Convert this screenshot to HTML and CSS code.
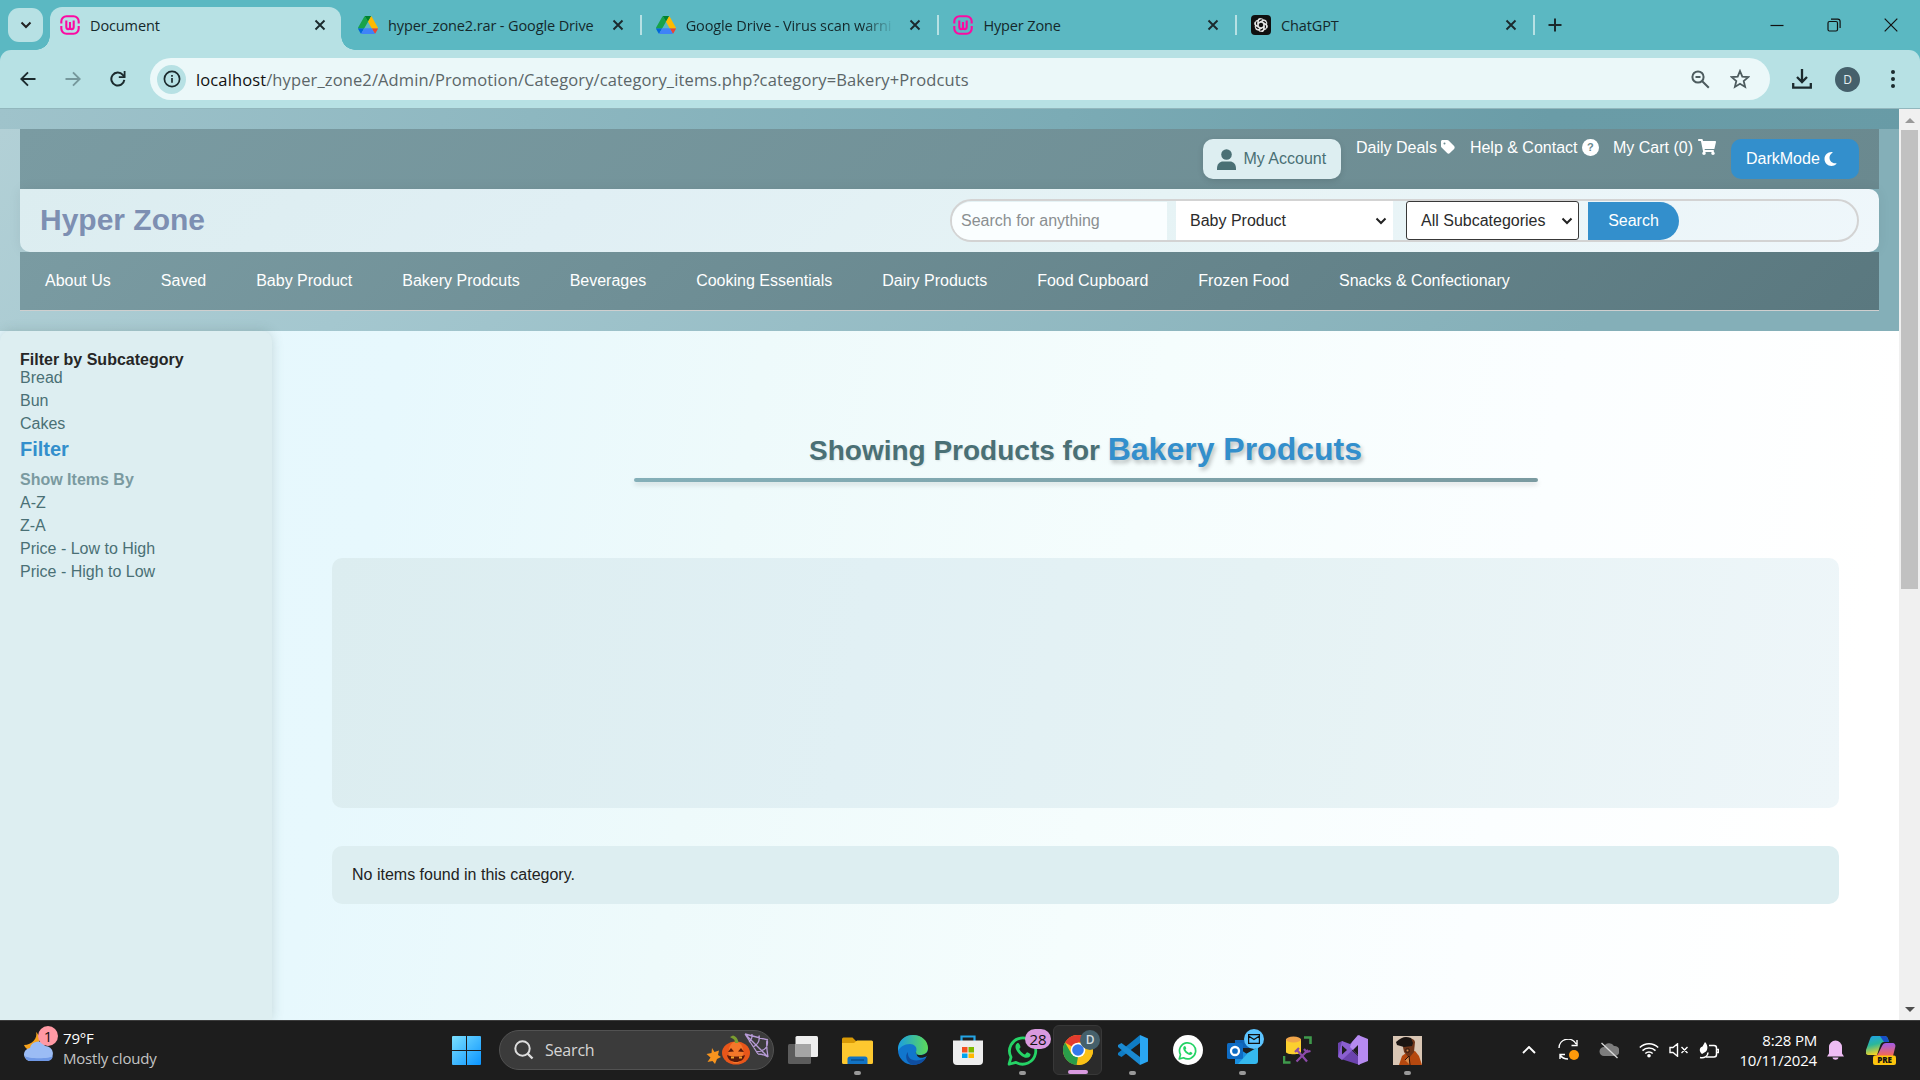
FILE: index.html
```html
<!DOCTYPE html>
<html lang="en">
<head>
<meta charset="utf-8">
<title>Document</title>
<link rel="stylesheet" href="styles.css">
</head>
<body>
<svg class="defs" width="0" height="0">
  <defs>
    <symbol id="x" viewBox="0 0 12 12"><path d="M1.5 1.5l9 9M10.5 1.5l-9 9" stroke="#1b2a2d" stroke-width="1.9" fill="none"/></symbol>
    <symbol id="wamp" viewBox="0 0 20 20"><g fill="none" stroke="#fb0aa2" stroke-width="2.1"><path d="M1.300 8.600V6.500a5.200 5.200 0 0 1 5.200-5.200h7a5.200 5.200 0 0 1 5.200 5.200v2.100M1.300 11v2.500a5.200 5.200 0 0 0 5.200 5.200h7a5.200 5.200 0 0 0 5.200-5.200V11"/><path d="M6.300 5.500v6.300c0 3.200 3.700 3.200 3.700 0V7M10 11.800c0 3.200 3.700 3.200 3.700 0V5.500"/></g></symbol>
    <symbol id="drive" viewBox="0 0 87.3 78"><path d="M6.6 66.85l3.85 6.65c.8 1.4 1.95 2.5 3.3 3.3L27.5 53H0c0 1.55.4 3.1 1.2 4.5z" fill="#0066da"/><path d="M43.65 25L29.9 1.2c-1.35.8-2.5 1.9-3.3 3.3L1.2 48.5A9 9 0 0 0 0 53h27.5z" fill="#17a34a"/><path d="M73.55 76.8c1.35-.8 2.5-1.9 3.3-3.3l9.25-16c.8-1.4 1.2-2.95 1.2-4.5H59.8l5.85 11.5z" fill="#ea4335"/><path d="M43.65 25L57.4 1.2C56.05.4 54.5 0 52.9 0H34.4c-1.6 0-3.15.45-4.5 1.2z" fill="#00832d"/><path d="M59.8 53H27.5L13.75 76.8c1.35.8 2.9 1.2 4.5 1.2h50.8c1.6 0 3.15-.45 4.5-1.2z" fill="#3f83f8"/><path d="M73.4 26.5L60.7 4.5c-.8-1.4-1.95-2.5-3.3-3.3L43.65 25 59.8 53h27.45c0-1.55-.4-3.1-1.2-4.5z" fill="#ffba00"/></symbol>
    <symbol id="caret" viewBox="0 0 12 8"><path d="M1.5 1.5L6 6l4.500-4.500" fill="none" stroke="#222" stroke-width="2"/></symbol>
    <symbol id="wa" viewBox="0 0 30 30"><path d="M2 28.300l1.900-6.800A12.700 12.700 0 1 1 8.700 26.500z" fill="none" stroke="currentColor" stroke-width="2.700" stroke-linejoin="round"/><path d="M10.800 7.800c-.9 0-2.600 1.100-2.600 3.500 0 4.400 6.300 10.700 10.800 10.700 2.600 0 3.800-1.800 3.800-3.200 0-.5-3-2-3.500-2l-1.900 2c-1.800-.5-5-3.500-5.500-5.300l1.200-1.700c0-.6-1.300-4-2.300-4z" fill="currentColor"/></symbol>
  </defs>
</svg>

<div class="tabstrip">
  <button class="tab-search"><svg width="12" height="8"><use href="#caret"/></svg></button>
  <div class="tab active"><svg width="20" height="20"><use href="#wamp"/></svg><span>Document</span><svg width="12" height="12"><use href="#x"/></svg></div>
  <div class="tab"><svg width="20" height="18"><use href="#drive"/></svg><span>hyper_zone2.rar - Google Drive</span><svg width="12" height="12"><use href="#x"/></svg></div>
  <div class="tab"><svg width="20" height="18"><use href="#drive"/></svg><span class="fade">Google Drive - Virus scan warni</span><svg width="12" height="12"><use href="#x"/></svg></div>
  <div class="tab"><svg width="20" height="20"><use href="#wamp"/></svg><span>Hyper Zone</span><svg width="12" height="12"><use href="#x"/></svg></div>
  <div class="tab"><svg width="20" height="20" viewBox="0 0 20 20"><rect width="20" height="20" rx="4" fill="#101010"/><g fill="none" stroke="#e8e8e8" stroke-width="1.100"><path id="p" d="M7.200 12.200V6.700a2.900 2.900 0 0 1 5.300-1.600M7.200 8l4.600-2.600a2.700 2.700 0 0 1 3.600 1.100"/><use href="#p" transform="rotate(60 10 10)"/><use href="#p" transform="rotate(120 10 10)"/><use href="#p" transform="rotate(180 10 10)"/><use href="#p" transform="rotate(240 10 10)"/><use href="#p" transform="rotate(300 10 10)"/></g></svg><span>ChatGPT</span><svg width="12" height="12"><use href="#x"/></svg></div>
  <svg class="plus" width="14" height="14" viewBox="0 0 14 14"><path d="M7 .5v13M.5 7h13" stroke="#1b2a2d" stroke-width="2"/></svg>
  <div class="winbtns">
    <svg width="14" height="14" viewBox="0 0 14 14"><path d="M.5 7.500h13" stroke="#111" stroke-width="1.200"/></svg>
    <svg width="14" height="14" viewBox="0 0 14 14"><path d="M1 5a1.500 1.500 0 0 1 1.500-1.500h6.500a1.500 1.500 0 0 1 1.500 1.500v6.500a1.500 1.500 0 0 1-1.500 1.500H2.500A1.500 1.500 0 0 1 1 11.500zM4 1.200h6.800a2.300 2.300 0 0 1 2.300 2.300v6.500" fill="none" stroke="#111" stroke-width="1.200"/></svg>
    <svg width="14" height="14" viewBox="0 0 14 14"><path d="M.7.700l12.600 12.600M13.300.7L.7 13.300" stroke="#111" stroke-width="1.200"/></svg>
  </div>
</div>

<div class="toolbar-bg"><div class="toolbar">
  <div class="navbtns">
    <svg width="16" height="16" viewBox="0 0 16 16"><path d="M15.500 8H1.500M8 1.300L1.300 8 8 14.700" fill="none" stroke="#1b2a2d" stroke-width="1.900"/></svg>
    <svg width="16" height="16" viewBox="0 0 16 16"><path d="M.5 8h14M8 1.300L14.700 8 8 14.700" fill="none" stroke="#76989c" stroke-width="1.900"/></svg>
    <svg width="16" height="16" viewBox="0 0 16 16"><path d="M14.300 8.800A6.500 6.500 0 1 1 12.800 3.800L14.500 6" fill="none" stroke="#1b2a2d" stroke-width="2"/><path d="M15.500 0v7H8.800V5.200h4.900V0z" fill="#1b2a2d"/></svg>
  </div>
  <div class="omnibox">
    <span class="info"><svg width="18" height="18" viewBox="0 0 18 18"><circle cx="9" cy="9" r="7.600" fill="none" stroke="#1b2a2d" stroke-width="1.700"/><path d="M9 8v4.700M9 5v1.700" stroke="#1b2a2d" stroke-width="1.700"/></svg></span>
    <span class="url"><b>localhost</b>/hyper_zone2/Admin/Promotion/Category/category_items.php?category=Bakery+Prodcuts</span>
    <svg width="19" height="19" viewBox="0 0 19 19"><circle cx="7" cy="7" r="5.600" fill="none" stroke="#4d5c5f" stroke-width="2"/><path d="M11 11l6.800 6.800M4.500 7h5" stroke="#4d5c5f" stroke-width="2"/></svg>
    <svg width="20" height="20" viewBox="0 0 20 20"><path d="M10 2l2.300 5.600 6 .5-4.600 3.900 1.400 5.900L10 14.700l-5.100 3.200 1.400-5.900L1.700 8.100l6-.5z" fill="none" stroke="#4d5c5f" stroke-width="1.800"/></svg>
  </div>
  <svg class="dl" width="20" height="20" viewBox="0 0 20 20"><path d="M10 0v12.500M5 8l5 5 5-5M1.200 14v4.700h17.600V14" fill="none" stroke="#1b2a2d" stroke-width="2.300"/></svg>
  <span class="avatar">D</span>
  <svg class="dots" width="4" height="18" viewBox="0 0 4 18"><g fill="#1b2a2d"><circle cx="2" cy="2" r="2"/><circle cx="2" cy="9" r="2"/><circle cx="2" cy="16" r="2"/></g></svg>
</div></div>

<div class="viewport">
  <div class="page">
    <header class="header">
      <div class="header-inner">
        <div class="topbar">
          <a class="account"><svg width="19" height="21" viewBox="0 0 19 21"><circle cx="9.500" cy="5.500" r="5.300" fill="#4a7075"/><path d="M0 21v-1.500c0-4.500 3-7 6-7h7c3 0 6 2.500 6 7V21z" fill="#4a7075"/></svg>My Account</a>
          <a>Daily Deals <svg width="14" height="16" viewBox="0 0 448 512"><path fill="#fff" d="M0 80V229.500c0 17 6.700 33.300 18.700 45.300l176 176c25 25 65.500 25 90.500 0L418.700 317.300c25-25 25-65.500 0-90.500l-176-176c-12-12-28.300-18.700-45.300-18.700H48C21.500 32 0 53.500 0 80zm112 32a32 32 0 1 1 0 64 32 32 0 1 1 0-64z"/></svg></a>
          <a>Help &amp; Contact <i class="help">?</i></a>
          <a>My Cart (0) <svg width="18" height="16" viewBox="0 0 576 512"><path fill="#fff" d="M528.120 301.319l47.273-208C578.806 78.301 567.391 64 551.990 64H159.208l-9.166-44.810C147.758 8.021 137.930 0 126.529 0H24C10.745 0 0 10.745 0 24v16c0 13.255 10.745 24 24 24h69.883l70.248 343.435C147.325 417.100 136 435.222 136 456c0 30.928 25.072 56 56 56s56-25.072 56-56c0-15.674-6.447-29.835-16.824-40h209.647C430.447 426.165 424 440.326 424 456c0 30.928 25.072 56 56 56s56-25.072 56-56c0-22.172-12.888-41.332-31.579-50.405l5.517-24.276c3.413-15.018-8.002-29.319-23.403-29.319H218.117l-6.545-32h293.145c11.206 0 20.920-7.754 23.403-18.681z"/></svg></a>
          <a class="dark">DarkMode <svg width="13" height="16" viewBox="0 0 384 512"><path fill="#fff" d="M223.500 32C100 32 0 132.300 0 256S100 480 223.500 480c60.600 0 115.500-24.200 155.800-63.400c5-4.900 6.300-12.500 3.100-18.700s-10.100-9.700-17-8.500c-9.800 1.700-19.800 2.600-30.100 2.600c-96.900 0-175.500-78.800-175.500-176c0-65.800 36-123.100 89.300-153.300c6.100-3.500 9.200-10.500 7.700-17.300s-7.300-11.900-14.300-12.500c-6.300-.5-12.600-.8-19-.8z"/></svg></a>
        </div>
        <div class="brandbar">
          <div class="brand">Hyper Zone</div>
          <div class="search">
            <div class="field">Search for anything</div>
            <div class="select cat">Baby Product<svg width="12" height="8"><use href="#caret"/></svg></div>
            <div class="select sub">All Subcategories<svg width="12" height="8"><use href="#caret"/></svg></div>
            <div class="go">Search</div>
          </div>
        </div>
        <nav class="nav"><a>About Us</a><a>Saved</a><a>Baby Product</a><a>Bakery Prodcuts</a><a>Beverages</a><a>Cooking Essentials</a><a>Dairy Products</a><a>Food Cupboard</a><a>Frozen Food</a><a>Snacks &amp; Confectionary</a></nav>
      </div>
    </header>
    <div class="body">
      <aside class="sidebar">
        <h4>Filter by Subcategory</h4>
        <a>Bread</a><a>Bun</a><a>Cakes</a>
        <h3>Filter</h3>
        <h5>Show Items By</h5>
        <a>A-Z</a><a>Z-A</a><a>Price - Low to High</a><a>Price - High to Low</a>
      </aside>
      <main class="main">
        <h1>Showing Products for <span>Bakery Prodcuts</span></h1>
        <div class="rule"></div>
        <div class="panel"></div>
        <div class="empty">No items found in this category.</div>
      </main>
    </div>
  </div>
  <div class="scrollbar"><i class="up"></i><i class="thumb"></i><i class="down"></i></div>
</div>

<div class="taskbar">
  <div class="weather">
    <div class="icon"><svg width="30" height="30" viewBox="0 0 30 30"><path d="M12 0c2 6-4 13-12 13 1 3 4 5 8 5 7 0 10-13 4-18z" fill="#f5a21c"/><path d="M7 29a6.500 6.500 0 0 1-1-13 8 8 0 0 1 15-2 7.600 7.600 0 0 1 2 15z" fill="#9bbcf5"/><path d="M1 24c2 3 26 3 28 0-.5 3-3 5-6 5H7c-3 0-5.500-2-6-5z" fill="#6f98e6"/></svg><b class="badge pink">1</b></div>
    <div class="wtext"><span>79°F</span><span class="dim">Mostly cloudy</span></div>
  </div>
  <div class="apps">
    <div class="app"><svg width="29" height="29" viewBox="0 0 29 29"><defs><linearGradient id="w" x2="1" y2="1"><stop stop-color="#7be0ff"/><stop offset="1" stop-color="#0a94ff"/></linearGradient></defs><path d="M0 1a1 1 0 0 1 1-1h13v14H0zM15 0h13a1 1 0 0 1 1 1v13H15zM0 15h14v14H1a1 1 0 0 1-1-1zM15 15h14v13a1 1 0 0 1-1 1H15z" fill="url(#w)"/></svg></div>
    <div class="pill"><svg width="20" height="20" viewBox="0 0 20 20"><circle cx="8.500" cy="8.500" r="7.200" fill="none" stroke="#ddd" stroke-width="2"/><path d="M13.500 13.500l5 5" stroke="#ddd" stroke-width="2.400"/></svg><span>Search</span>
      <svg width="64" height="34" viewBox="0 0 64 34"><path d="M6 15l2.500 4 4.500-1.500-1 4.500 3 2-4 2-2 5-2.500-3-5 1 3-4.500-4-3.500 5-1z" fill="#f7941e"/><ellipse cx="30" cy="20" rx="14" ry="11.500" fill="#e8561a"/><ellipse cx="30" cy="19.500" rx="7.500" ry="11" fill="#f4772a"/><path d="M29 10c0-4-2-4-5-6l3-1.500c4 1.500 5 4 5.500 7.500z" fill="#7a9d2f"/><path d="M22 19l3-4 3 3.500zM32 18.500l3-3.500 3 4zM21 22c5 2 13 2 18 0-1 5-5 7-9 7s-8-2-9-7z" fill="#5a1a0a"/><path d="M25 23.500h3v2h-3zM33 23.500h3v2h-3z" fill="#f4a02a"/><path d="M39 1l22 22M39 1l23 6M39 1l13 20M46 1c0 4 0 5-3 8M53 2.500c1 5-1 9-6 11.500M61 6c2 8-2 12-11 13M52 21c3 0 7 1 10 3M61 6c-1 6 0 12 1 18" fill="none" stroke="#b79bd6" stroke-width="1.300"/></svg></div>
    <div class="app"><svg width="30" height="28" viewBox="0 0 30 28"><rect y="8" width="23" height="20" rx="1.500" fill="#5c5c5c"/><rect x="7.500" width="22.500" height="21" rx="1.500" fill="#eee"/><path d="M7.500 8H23v13H7.500z" fill="#a5a5a5"/></svg></div>
    <div class="app run"><svg width="31" height="27" viewBox="0 0 31 27"><path d="M0 2a1.500 1.500 0 0 1 1.500-1.500h9L14 4h15.500A1.500 1.500 0 0 1 31 5.500V10H0z" fill="#d99a06"/><path d="M0 6h12l3-2.500h14.500A1.500 1.500 0 0 1 31 5v20.500a1.500 1.500 0 0 1-1.500 1.500h-28A1.500 1.500 0 0 1 0 25.500z" fill="#fdc82f"/><path d="M5.500 27v-5a2.500 2.500 0 0 1 2.500-2.500h15a2.500 2.500 0 0 1 2.500 2.500v5z" fill="#1273c4"/><path d="M9 23h13" stroke="#0b4f8e" stroke-width="1.500"/></svg></div>
    <div class="app"><svg width="30" height="30" viewBox="0 0 30 30"><defs><linearGradient id="e1" x2="1"><stop stop-color="#1b9de2"/><stop offset="1" stop-color="#5ddb57"/></linearGradient></defs><circle cx="15" cy="15" r="15" fill="#1176cd"/><path d="M0 13C1 4 8 0 15 0c9 0 15 6 15 13 0 5-4 7-8 7-3 0-5-1-4-3 2-5-2-8-6-8-6 0-10 3-12 7z" fill="url(#e1)"/><path d="M10 17c-1 8 7 11 18 6-3 5-8 7-13 7C9 29 6 21 10 17z" fill="#0f4ea0"/><path d="M30 14c0 4-4 6-8 6-3 0-5-1-4-3 1 8 7 6 11 4l1-2z" fill="#1c1c1c"/></svg></div>
    <div class="app"><svg width="30" height="30" viewBox="0 0 30 30"><path d="M8.500 7V1.500h13V7" fill="none" stroke="#24a4e4" stroke-width="2.200"/><path d="M0 5.500h30V26a4 4 0 0 1-4 4H4a4 4 0 0 1-4-4z" fill="#eee"/><path d="M9 12h5.500v5.500H9z" fill="#f25022"/><path d="M15.500 12H21v5.500h-5.500z" fill="#7fba00"/><path d="M9 18.500h5.500V23H9z" fill="#00a4ef"/><path d="M15.500 18.500H21V23h-5.500z" fill="#ffb900"/></svg></div>
    <div class="app run"><svg class="green" width="31" height="31"><use href="#wa"/></svg><b class="badge count">28</b></div>
    <div class="app run focus"><svg width="30" height="30" viewBox="0 0 30 30"><circle cx="15" cy="15" r="15" fill="#fbc116"/><path d="M15 15L2 7.500A15 15 0 0 1 28 7.500H15z" fill="#e33b2e"/><path d="M2 7.500L8.500 19 15 22l-1.500 8A15 15 0 0 1 2 7.500z" fill="#2a9d4a"/><path d="M21.500 18.700L14 30A15 15 0 0 0 28 7.500H15z" fill="#fbc116"/><circle cx="15" cy="15" r="7.300" fill="#fff"/><circle cx="15" cy="15" r="5.800" fill="#3478ea"/></svg><b class="badge prof">D</b></div>
    <div class="app run"><svg width="30" height="30" viewBox="0 0 30 30"><path d="M22 0v8L3.500 22 0 20v-2z" fill="#0f7cc4"/><path d="M22 30v-8L3.500 8 0 10v2z" fill="#1a8ad2"/><path d="M22 0l8 3.500v23L22 30z" fill="#2aa6f2"/></svg></div>
    <div class="app"><span class="wadisc"><svg class="green" width="19" height="19"><use href="#wa"/></svg></span></div>
    <div class="app run"><svg width="31" height="28" viewBox="0 0 31 28"><path d="M8 4h21v8H8z" fill="#1062b4"/><path d="M8 12l11 6 12-7v14a3 3 0 0 1-3 3H11a3 3 0 0 1-3-3z" fill="#35b8ee"/><path d="M8 10l12 8-9 10H8z" fill="#1a8fe0"/><rect y="7" width="16" height="16" rx="1.500" fill="#0f6cc4"/><circle cx="8" cy="15" r="4" fill="none" stroke="#fff" stroke-width="2.300"/></svg><b class="badge mail"><svg width="12" height="10" viewBox="0 0 12 10"><path d="M.6.600h10.800v8.800H.6zM.6 2L6 5.500 11.400 2" fill="none" stroke="#111" stroke-width="1.200"/></svg></b></div>
    <div class="app"><svg width="29" height="28" viewBox="0 0 29 28"><path d="M3 3v13c0 3 15 3 15 0V3z" fill="#fccf2f"/><ellipse cx="10.500" cy="3.500" rx="7.500" ry="3" fill="#f0a54a"/><path d="M21 1.500h6.500V8M1 20v6.500h6.500" fill="none" stroke="#3f9a4c" stroke-width="2.600"/><path d="M14 14l10 11.500M25 14L13.500 25.500M12 16l4-4M21 13l2.500 3 4-1" fill="none" stroke="#8c4aa8" stroke-width="2.200"/></svg></div>
    <div class="app"><svg width="30" height="30" viewBox="0 0 30 30"><path d="M0 8l4-2 18 17v7L3 24 0 21z" fill="#6b43ad"/><path d="M0 22l4 3L22 8V0L12 9 4 6z" fill="#8a5fd0"/><path d="M4 10.500L9 15l-5 4.500z" fill="#1d1d1d"/><path d="M20 0l10 4v22l-10 4V20l-8-8 2-5z" fill="#b68af0"/><path d="M20 10v10l-5-5z" fill="#1d1d1d"/></svg></div>
    <div class="app run"><svg width="29" height="29" viewBox="0 0 29 29"><path d="M0 0h29v29H0z" fill="#d9c6b4"/><path d="M6 29l3-9 4-3 9-2 4 5 3 9z" fill="#b5480f"/><path d="M9 6c3-5 12-5 13 0l-1 10-5 6-5-6z" fill="#6e3418"/><path d="M3 6c6-5 9-6 15-4l2 5-1 3-8 1-7-2z" fill="#1b1512"/><path d="M13 13h3v3h-3zM12 24l4-4 1 9" fill="#d88a4c" stroke="#2a120a"/></svg></div>
  </div>
  <div class="tray">
    <svg width="14" height="8" viewBox="0 0 14 8"><path d="M1 7l6-6 6 6" fill="none" stroke="#fff" stroke-width="1.900"/></svg>
    <svg width="22" height="22" viewBox="0 0 22 22"><path d="M1 9A9 9 0 0 1 18 5M19 1v5.500h-5.500M2 20v-4.500h5M2 16c2 3 5 4 8 4" fill="none" stroke="#fff" stroke-width="1.400"/><circle cx="16" cy="16" r="5" fill="#ff9a0a"/></svg>
    <svg width="20" height="18" viewBox="0 0 20 18"><path d="M5 15a4.500 4.500 0 0 1 0-9 5.500 5.500 0 0 1 10-1 5 5 0 0 1 1 10z" fill="#7d7d7d"/><path d="M2.500 2l16 15" stroke="#ddd" stroke-width="1.300"/></svg>
    <svg width="20" height="16" viewBox="0 0 20 16"><path d="M.8 5.500a13 13 0 0 1 18.400 0M3.500 8.600a9.200 9.200 0 0 1 13 0M6.300 11.500a5.200 5.200 0 0 1 7.400 0" fill="none" stroke="#fff" stroke-width="1.500"/><circle cx="10" cy="13.700" r="1.800" fill="#fff"/></svg>
    <svg width="20" height="14" viewBox="0 0 20 14"><path d="M1 4.500h3L8.500.8v12.400L4 9.500H1zM12.500 4l6 6M18.500 4l-6 6" fill="none" stroke="#fff" stroke-width="1.400"/></svg>
    <svg width="20" height="17" viewBox="0 0 20 17"><path d="M10 3.500h5a2.500 2.500 0 0 1 2.500 2.500v6.500A2.500 2.500 0 0 1 15 15H7M18 7.500h1.500v3H18" fill="none" stroke="#fff" stroke-width="1.500"/><path d="M6 0c3 3 3 7 1 9.500L3 12C-.5 9 .5 5.500 3.500 4.500z" fill="#fff"/><path d="M1 15.500c4 1 8-1 8-5" fill="none" stroke="#fff" stroke-width="1.500"/></svg>
    <div class="clock"><span>8:28 PM</span><span>10/11/2024</span></div>
    <svg width="17" height="20" viewBox="0 0 17 20"><path d="M0 16.500l2-3V7a6.500 6.500 0 0 1 13 0v6.500l2 3zM5.500 17.500h6c-.5 3-5.500 3-6 0z" fill="#eebcf4"/></svg>
    <svg width="30" height="29" viewBox="0 0 30 29"><defs><linearGradient id="c1" x2=".3" y2="1"><stop stop-color="#1ea0f0"/><stop offset=".5" stop-color="#2bb79a"/><stop offset="1" stop-color="#f5d324"/></linearGradient><linearGradient id="c2" x2="0" y2="1"><stop stop-color="#a25be8"/><stop offset="1" stop-color="#f8694e"/></linearGradient></defs><path d="M7 0h12c2 0 3 2 4 6h-5c-2 0-3 1-4 4l-3 9H3c-3 0-4-2-3-5L4 3c.6-2 1.500-3 3-3z" fill="url(#c1)"/><path d="M14 0h5c2 0 3 2 4 6h-5z" fill="#174fc8"/><path d="M20 7h6c3 0 4 2 3 5l-2 8H8c3 0 4-2 5-4l3-6c1-2 2-3 4-3z" fill="url(#c2)"/><rect x="7" y="19.500" width="23" height="9.500" rx="2" fill="#fcc40e"/><text x="18.500" y="27.200" text-anchor="middle" font-family="Open Sans, sans-serif" font-weight="800" font-size="8" fill="#111">PRE</text></svg>
  </div>
</div>
</body>
</html>
```
FILE: styles.css
```css
* { box-sizing: border-box; }
body { margin: 0; width: 1920px; height: 1080px; overflow: hidden; display: flex; flex-direction: column; font-family: "Liberation Sans", Arial, sans-serif; font-size: 16px; color: #222; }
svg { flex: none; display: block; }
.defs { position: absolute; }
h1, h3, h4, h5 { margin: 0; }

/* browser chrome */
.tabstrip { height: 50px; flex: none; background: #5bb8c2; display: flex; align-items: center; padding-left: 8px; font: 14.500px "Open Sans", sans-serif; letter-spacing: -.12px; color: #14282b; }
.tab-search { width: 35px; height: 34px; border: 0; border-radius: 11px; background: #b7e1e4; display: flex; align-items: center; justify-content: center; padding: 0; margin-right: 7px; }
.tab { width: 297.700px; height: 20px; display: flex; align-items: center; padding: 0 16px 0 14px; border-right: 2px solid #b7e1e4; }
.tab span { flex: 1; margin: 1px 8px 0 10px; white-space: nowrap; line-height: 22px; }
.tab .fade { -webkit-mask-image: linear-gradient(90deg, #000 82%, transparent 97%); mask-image: linear-gradient(90deg, #000 82%, transparent 97%); }
.tab.active { width: 291px; height: 43px; align-self: flex-end; margin-right: 3px; background: #b7e1e4; border: 0; border-radius: 12px 12px 0 0; padding: 0 15px 7px 10px; position: relative; }
.tab.active::before, .tab.active::after { content: ""; position: absolute; bottom: 0; width: 14px; height: 14px; }
.tab.active::before { left: -14px; background: radial-gradient(circle at 0 0, transparent 13.500px, #b7e1e4 14px); }
.tab.active::after { right: -14px; background: radial-gradient(circle at 100% 0, transparent 13.500px, #b7e1e4 14px); }
.plus { margin-left: 13px; }
.winbtns { margin-left: auto; display: flex; gap: 43px; padding-right: 22px; }
.toolbar-bg { background: #5bb8c2; flex: none; }
.toolbar { height: 59px; background: #b7e1e4; border-bottom: 1px solid #92b7bd; border-radius: 11px 11px 0 0; display: flex; align-items: center; padding-left: 20px; }
.navbtns { display: flex; gap: 29px; width: 130px; }
.omnibox { width: 1620px; height: 42px; border-radius: 21px; background: #ebf8f9; display: flex; align-items: center; padding: 0 20px 0 7px; }
.omnibox > svg:last-child { margin-left: 20px; }
.info { width: 29px; height: 29px; border-radius: 50%; background: #b7e1e4; display: flex; align-items: center; justify-content: center; }
.url { flex: 1; margin-left: 10px; font: 16.500px "Open Sans", sans-serif; color: #5b6668; white-space: nowrap; letter-spacing: .12px; }
.url b { font-weight: 400; color: #111; }
.dl { margin-left: 22px; }
.avatar { width: 25px; height: 25px; border-radius: 50%; background: #45606b; color: #e4eef0; font: 12px/25px "Open Sans", sans-serif; text-align: center; margin-left: 23px; }
.dots { margin-left: 31px; }

/* web page */
.viewport { height: 911px; flex: none; display: flex; }
.page { width: 1899px; display: flex; flex-direction: column; background: #fff; }
.header { height: 222px; flex: none; padding-top: 20px; background: linear-gradient(100deg, #9fc3cb, #7babb5 55%, #6a9ca7 80%, #689ba6); }
.header-inner { height: 202px; padding: 0 20px 20px; background: linear-gradient(135deg, #b2d0d6, #a4c7cf 25%, #84afb8 85%); }
.topbar { height: 60px; background: linear-gradient(135deg, #7a9ba2, #6a898f); display: flex; align-items: flex-start; justify-content: flex-end; gap: 14.500px; padding: 10px 20px 0; color: #fff; }
.topbar a { display: flex; gap: 4.500px; line-height: 18px; white-space: nowrap; }
.topbar a.account { width: 138px; height: 40px; background: #ddeef1; color: #4a7075; border-radius: 10px; align-items: center; padding-left: 14px; gap: 7px; box-shadow: 0 2px 6px rgba(0,0,0,.12); }
.topbar a.dark { width: 128px; height: 40px; background: #338fcc; border-radius: 10px; align-items: center; padding-left: 15px; margin-left: 1px; }
.help { width: 16.500px; height: 17px; border-radius: 50%; background: #fff; color: #6a898f; font: bold 11px/17px "Liberation Sans", sans-serif; text-align: center; }
.brandbar { height: 63px; background: linear-gradient(135deg, #dcedf0, #e0eff4 30%, #e6f3f5 60%, #eff7fb); border-radius: 0 10px 10px 10px; display: flex; align-items: center; justify-content: space-between; padding: 0 20px; box-shadow: 0 0 14px rgba(0,0,0,.06); }
.brand { font-size: 30px; font-weight: 700; color: #7d8fb2; margin-top: -1px; }
.search { width: 909px; height: 43px; border: 2px solid #d3d3d3; border-radius: 22px; display: flex; align-items: center; }
.field { width: 215px; height: 38px; line-height: 38px; background: #fafeff; border-radius: 20px 0 0 20px; padding-left: 9px; color: #8a8f91; margin-right: 9px; }
.select { height: 39px; background: #fff; display: flex; align-items: center; justify-content: space-between; padding: 0 6px 0 14px; color: #2b2b2b; }
.cat { width: 217px; margin-right: 13px; }
.sub { width: 173px; margin-right: 9px; border: 1.500px solid #383838; border-radius: 3px; padding-right: 5px; }
.go { width: 91px; height: 38px; line-height: 38px; background: #338fcc; color: #fff; text-align: center; border-radius: 0 19px 19px 0; }
.nav { height: 59px; background: linear-gradient(135deg, #7a9ba2, #5a787f); border-bottom: 1px solid #cfcfcf; display: flex; gap: 50px; padding: 0 25px; line-height: 58px; color: #fff; white-space: nowrap; }
.body { flex: 1; display: flex; background: linear-gradient(100deg, #e5f7fd, #e7f8fd 20%, #eefafb 38%, #f5fdfd 58%, #fbfeff 78%, #fff 95%); }
.sidebar { width: 272px; background: #ddeef1; border-radius: 10px 10px 0 0; box-shadow: 0 0 12px rgba(70,100,90,.22); padding: 21px 20px 0; display: flex; flex-direction: column; color: #4a7075; line-height: 23px; }
.sidebar h4 { font-size: 16px; line-height: 16px; color: #262626; }
.sidebar h4 + a { margin-top: -2px; }
.sidebar h3 { font-size: 20px; line-height: 28px; color: #338fcc; }
.sidebar h5 { font-size: 16px; line-height: 23px; color: #7a9aa0; margin-top: 5px; }
.main { flex: 1; padding: 98px 60px 0; }
h1 { font-size: 28px; line-height: 40px; text-align: center; color: #4a7075; text-shadow: 1px 1px 2px rgba(0,0,0,.1); }
h1 span { font-size: 32px; color: #338fcc; text-shadow: 2px 3px 4px rgba(0,0,0,.25); }
.rule { width: 904px; height: 4px; margin: 7px auto 76px; border-radius: 2px; background: linear-gradient(90deg, #84afb8, #7a9aa0); box-shadow: 0 3px 5px rgba(0,0,0,.12); }
.panel { height: 250px; border-radius: 10px; background: linear-gradient(100deg, #dcedf0, #e1f0f4 35%, #e5f2f4 60%, #eef6f9); margin-bottom: 38px; }
.empty { height: 58px; border-radius: 10px; background: #ddeef1; padding: 0 20px; line-height: 57px; }
.scrollbar { width: 21px; background: #f0f0f0; display: flex; flex-direction: column; align-items: center; }
.up { border: 5px solid transparent; border-top: 0; border-bottom: 5px solid #999; margin: 9px 0 7px; }
.thumb { width: 17px; height: 459px; background: #c1c1c1; }
.down { border: 5px solid transparent; border-bottom: 0; border-top: 5px solid #4f4f4f; margin: auto 0 8px; }

/* taskbar */
.taskbar { height: 60px; flex: none; background: #1d1d1d; border-top: 1px solid #3c3c3c; display: flex; align-items: center; font: 15px "Open Sans", sans-serif; letter-spacing: -.2px; color: #fff; }
.weather { width: 439px; display: flex; padding-left: 24px; }
.icon { position: relative; }
.icon > svg { margin-top: -1px; }
.wtext { display: flex; flex-direction: column; margin-left: 9px; line-height: 20px; margin-top: -5px; }
.dim { color: #c4c4c4; }
.badge { position: absolute; height: 20px; line-height: 20px; border-radius: 10px; text-align: center; color: #111; font-weight: 400; }
.pink { width: 20px; left: 14px; top: -7px; background: #ff99a4; }
.apps { display: flex; align-items: center; height: 59px; margin-top: -1px; }
.app { width: 55px; height: 50px; position: relative; display: flex; align-items: center; justify-content: center; }
.run::after { content: ""; position: absolute; bottom: 0; left: 24px; width: 7px; height: 4px; border-radius: 2px; background: #999; }
.focus { background: #2b2b2b; border: 1px solid #383838; border-radius: 6px; width: 49px; margin: 0 3px; }
.focus::after { left: 14px; width: 20px; background: #d99ae0; bottom: 0; }
.count { width: 26px; left: 30px; top: 4px; background: #d99ae0; }
.prof { width: 20px; left: 26px; top: 4px; background: #45606b; color: #d5dde0; font: 600 12px/20px "Open Sans", sans-serif; }
.mail { width: 20px; left: 29px; top: 4px; background: #5cc4ff; display: flex; align-items: center; justify-content: center; }
.green { color: #25d366; }
.wadisc { width: 30px; height: 30px; border-radius: 50%; background: #fff; display: flex; align-items: center; justify-content: center; }
.pill { width: 275px; height: 40px; border: 1px solid #525252; border-radius: 20px; background: #3b3b3b; display: flex; align-items: center; padding: 0 3px 0 14px; margin: 0 1px 0 5px; font-size: 16px; color: #d5d5d5; }
.pill span { flex: 1; margin-left: 11px; }
.tray { margin-left: auto; display: flex; align-items: center; padding-right: 24px; margin-top: -1px; }
.tray svg:nth-child(2) { margin-left: 22px; }
.tray svg:nth-child(3) { margin-left: 19px; }
.tray svg:nth-child(4) { margin-left: 20px; }
.tray svg:nth-child(5) { margin-left: 10px; }
.tray svg:nth-child(6) { margin-left: 10px; }
.clock { width: 98px; display: flex; flex-direction: column; text-align: right; line-height: 20px; margin-top: -1px; }
.clock + svg { margin-left: 10px; }
.tray svg:last-child { margin-left: 22px; }
```
